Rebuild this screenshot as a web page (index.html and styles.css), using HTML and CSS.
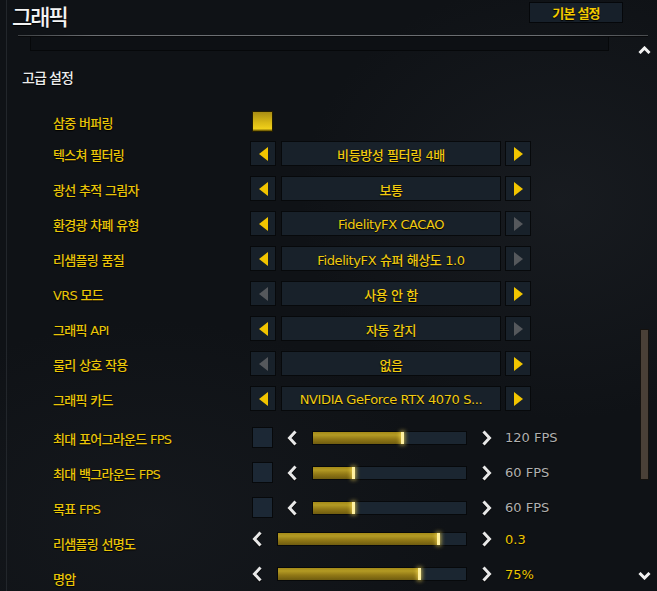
FILE: index.html
```html
<!DOCTYPE html>
<html lang="ko">
<head>
<meta charset="utf-8">
<title>그래픽</title>
<link rel="stylesheet" href="styles.css">
</head>
<body>
<div class="screen">
  <header class="header">
    <h1 class="title">그래픽</h1>
    <div class="reset">기본 설정</div>
  </header>
  <div class="divider"></div>
  <div class="main">
    <div class="content">
      <div class="clip-box"></div>
      <h2 class="section">고급 설정</h2>
      <div class="rows">
        <div class="row row-first">
          <span class="label">삼중 버퍼링</span>
          <span class="check on"></span>
        </div>

        <div class="row">
          <span class="label">텍스쳐 필터링</span>
          <div class="selector">
            <span class="sbtn on"><svg width="9" height="14" viewBox="0 0 9 14"><polygon points="9,0 0,7 9,14"/></svg></span>
            <span class="sval">비등방성 필터링 4배</span>
            <span class="sbtn on"><svg width="9" height="14" viewBox="0 0 9 14"><polygon points="0,0 9,7 0,14"/></svg></span>
          </div>
        </div>

        <div class="row">
          <span class="label">광선 추적 그림자</span>
          <div class="selector">
            <span class="sbtn on"><svg width="9" height="14" viewBox="0 0 9 14"><polygon points="9,0 0,7 9,14"/></svg></span>
            <span class="sval">보통</span>
            <span class="sbtn on"><svg width="9" height="14" viewBox="0 0 9 14"><polygon points="0,0 9,7 0,14"/></svg></span>
          </div>
        </div>

        <div class="row">
          <span class="label">환경광 차폐 유형</span>
          <div class="selector">
            <span class="sbtn on"><svg width="9" height="14" viewBox="0 0 9 14"><polygon points="9,0 0,7 9,14"/></svg></span>
            <span class="sval">FidelityFX CACAO</span>
            <span class="sbtn off"><svg width="9" height="14" viewBox="0 0 9 14"><polygon points="0,0 9,7 0,14"/></svg></span>
          </div>
        </div>

        <div class="row">
          <span class="label">리샘플링 품질</span>
          <div class="selector">
            <span class="sbtn on"><svg width="9" height="14" viewBox="0 0 9 14"><polygon points="9,0 0,7 9,14"/></svg></span>
            <span class="sval">FidelityFX 슈퍼 해상도 1.0</span>
            <span class="sbtn off"><svg width="9" height="14" viewBox="0 0 9 14"><polygon points="0,0 9,7 0,14"/></svg></span>
          </div>
        </div>

        <div class="row">
          <span class="label">VRS 모드</span>
          <div class="selector">
            <span class="sbtn off"><svg width="9" height="14" viewBox="0 0 9 14"><polygon points="9,0 0,7 9,14"/></svg></span>
            <span class="sval">사용 안 함</span>
            <span class="sbtn on"><svg width="9" height="14" viewBox="0 0 9 14"><polygon points="0,0 9,7 0,14"/></svg></span>
          </div>
        </div>

        <div class="row">
          <span class="label">그래픽 API</span>
          <div class="selector">
            <span class="sbtn on"><svg width="9" height="14" viewBox="0 0 9 14"><polygon points="9,0 0,7 9,14"/></svg></span>
            <span class="sval">자동 감지</span>
            <span class="sbtn off"><svg width="9" height="14" viewBox="0 0 9 14"><polygon points="0,0 9,7 0,14"/></svg></span>
          </div>
        </div>

        <div class="row">
          <span class="label">물리 상호 작용</span>
          <div class="selector">
            <span class="sbtn off"><svg width="9" height="14" viewBox="0 0 9 14"><polygon points="9,0 0,7 9,14"/></svg></span>
            <span class="sval">없음</span>
            <span class="sbtn on"><svg width="9" height="14" viewBox="0 0 9 14"><polygon points="0,0 9,7 0,14"/></svg></span>
          </div>
        </div>

        <div class="row">
          <span class="label">그래픽 카드</span>
          <div class="selector">
            <span class="sbtn on"><svg width="9" height="14" viewBox="0 0 9 14"><polygon points="9,0 0,7 9,14"/></svg></span>
            <span class="sval">NVIDIA GeForce RTX 4070 S...</span>
            <span class="sbtn on"><svg width="9" height="14" viewBox="0 0 9 14"><polygon points="0,0 9,7 0,14"/></svg></span>
          </div>
        </div>

        <div class="row row-gap">
          <span class="label">최대 포어그라운드 FPS</span>
          <div class="slider">
            <span class="check off"></span>
            <svg class="chev" width="10" height="16" viewBox="0 0 10 16"><polyline points="8.5,1.5 2.5,8 8.5,14.5"/></svg>
            <span class="track short"><span class="fill" style="width:58.7%"></span></span>
            <svg class="chev" width="10" height="16" viewBox="0 0 10 16"><polyline points="1.5,1.5 7.5,8 1.5,14.5"/></svg>
            <span class="val">120 FPS</span>
          </div>
        </div>

        <div class="row">
          <span class="label">최대 백그라운드 FPS</span>
          <div class="slider">
            <span class="check off"></span>
            <svg class="chev" width="10" height="16" viewBox="0 0 10 16"><polyline points="8.5,1.5 2.5,8 8.5,14.5"/></svg>
            <span class="track short"><span class="fill" style="width:27.1%"></span></span>
            <svg class="chev" width="10" height="16" viewBox="0 0 10 16"><polyline points="1.5,1.5 7.5,8 1.5,14.5"/></svg>
            <span class="val">60 FPS</span>
          </div>
        </div>

        <div class="row">
          <span class="label">목표 FPS</span>
          <div class="slider">
            <span class="check off"></span>
            <svg class="chev" width="10" height="16" viewBox="0 0 10 16"><polyline points="8.5,1.5 2.5,8 8.5,14.5"/></svg>
            <span class="track short"><span class="fill" style="width:27.1%"></span></span>
            <svg class="chev" width="10" height="16" viewBox="0 0 10 16"><polyline points="1.5,1.5 7.5,8 1.5,14.5"/></svg>
            <span class="val">60 FPS</span>
          </div>
        </div>

        <div class="row">
          <span class="label">리샘플링 선명도</span>
          <div class="slider slider-plain">
            <svg class="chev" width="10" height="16" viewBox="0 0 10 16"><polyline points="8.5,1.5 2.5,8 8.5,14.5"/></svg>
            <span class="track long"><span class="fill" style="width:85.8%"></span></span>
            <svg class="chev" width="10" height="16" viewBox="0 0 10 16"><polyline points="1.5,1.5 7.5,8 1.5,14.5"/></svg>
            <span class="val hl">0.3</span>
          </div>
        </div>

        <div class="row">
          <span class="label">명암</span>
          <div class="slider slider-plain">
            <svg class="chev" width="10" height="16" viewBox="0 0 10 16"><polyline points="8.5,1.5 2.5,8 8.5,14.5"/></svg>
            <span class="track long"><span class="fill" style="width:75.3%"></span></span>
            <svg class="chev" width="10" height="16" viewBox="0 0 10 16"><polyline points="1.5,1.5 7.5,8 1.5,14.5"/></svg>
            <span class="val hl">75%</span>
          </div>
        </div>
      </div>
    </div>
    <div class="scrollbar">
      <svg class="sc-up" width="13" height="8" viewBox="0 0 13 8"><polyline points="1.5,7 6.5,2 11.5,7"/></svg>
      <span class="thumb"></span>
      <svg class="sc-down" width="13" height="8" viewBox="0 0 13 8"><polyline points="1.5,1 6.5,6 11.5,1"/></svg>
    </div>
  </div>
</div>
</body>
</html>
```

FILE: styles.css
```css
* { box-sizing: border-box; }

body {
  margin: 0;
  background: #0f1216;
}

.screen {
  width: 657px;
  height: 591px;
  overflow: hidden;
  display: flex;
  flex-direction: column;
  font-family: "DejaVu Sans", "Noto Sans CJK KR", sans-serif;
  background:
    linear-gradient(to right, transparent 6px, #22262b 6px, #22262b 7px, transparent 7px),
    radial-gradient(ellipse 260px 220px at 560px 200px, rgba(40, 44, 50, 0.35), transparent),
    radial-gradient(ellipse 300px 200px at 150px 520px, rgba(34, 38, 44, 0.3), transparent),
    #0f1216;
}

/* Header */
.header {
  height: 35px;
  flex: 0 0 auto;
  display: flex;
  justify-content: space-between;
  align-items: flex-start;
}

.title {
  margin: 2px 0 0 12px;
  font-family: "Noto Sans CJK KR", sans-serif;
  font-weight: 500;
  font-size: 22px;
  line-height: 26px;
  letter-spacing: -2px;
  color: #f4f4f4;
  text-shadow: 0 1px 1px #000;
}

.reset {
  margin: 2px 34px 0 0;
  width: 94px;
  height: 21px;
  background: #17202a;
  border: 1px solid #05070a;
  display: flex;
  align-items: center;
  justify-content: center;
  color: #f5cb00;
  font-family: "Noto Sans CJK KR", sans-serif;
  font-weight: 700;
  font-size: 13px;
  letter-spacing: -0.8px;
  text-shadow: 0 1px 1px #000;
}

.divider {
  flex: 0 0 auto;
  height: 2px;
  margin: 0 9px 0 18px;
  background: linear-gradient(to right, #3d4043, #6c6f73 12%, #6a6d71 85%, #4a4d50);
  border-bottom: 1px solid #08090b;
}

/* Main area */
.main {
  flex: 1;
  display: flex;
  min-height: 0;
}

.content {
  width: 637px;
  flex: 0 0 auto;
}

.clip-box {
  margin-left: 30px;
  width: 579px;
  height: 14px;
  background: #0d1014;
  border: 1px solid #06080a;
  border-top: none;
}

.section {
  margin: 16px 0 0 22px;
  font-family: "Noto Sans CJK KR", sans-serif;
  font-weight: 500;
  font-size: 14px;
  line-height: 20px;
  letter-spacing: -0.9px;
  color: #ececec;
  text-shadow: 0 1px 1px #000;
}

.rows {
  margin-top: 19px;
}

.row {
  height: 35px;
  display: flex;
  align-items: center;
}

.row-first { height: 30px; }
.row-gap { margin-top: 4px; }

.label {
  flex: 0 0 250px;
  padding-left: 53px;
  padding-top: 2px;
  font-size: 13px;
  font-weight: 500;
  letter-spacing: -0.7px;
  color: #eac508;
  text-shadow: 0 1px 1px #000;
  white-space: nowrap;
}

/* Checkbox */
.check {
  width: 21px;
  height: 21px;
  margin-left: 2px;
  border: 1px solid #07090b;
  flex: 0 0 auto;
}

.check.on {
  background: linear-gradient(#a98d14, #d9b915 55%, #f0d01a 88%, #5c4a00);
  border-color: #231d02;
}

.check.off {
  background: #1c2835;
}

/* Selector */
.selector {
  display: flex;
  height: 25px;
}

.sbtn {
  width: 26px;
  height: 25px;
  background: #18212a;
  border: 1px solid #07090b;
  display: flex;
  align-items: center;
  justify-content: center;
}

.sbtn.on svg { fill: #f2c500; }
.sbtn.off svg { fill: #55585c; }

.sval {
  width: 220px;
  height: 25px;
  margin: 0 4px 0 5px;
  background: #18212a;
  border: 1px solid #07090b;
  display: flex;
  align-items: center;
  justify-content: center;
  padding-top: 1px;
  font-size: 13px;
  font-weight: 500;
  letter-spacing: -0.4px;
  color: #f0ca10;
  text-shadow: 0 1px 1px #000;
  white-space: nowrap;
}

/* Slider */
.slider {
  display: flex;
  align-items: center;
}

.slider .check {
  margin-right: 14px;
}

.slider-plain {
  margin-left: 2px;
  margin-top: -7px;
}

.chev {
  flex: 0 0 auto;
  fill: none;
  stroke: #e8e8e8;
  stroke-width: 3;
  filter: drop-shadow(0 1px 0 #000);
}

.track {
  margin: 0 15px;
  height: 14px;
  border: 1px solid #07090b;
  background: #1b2631;
  display: block;
}

.track.short { width: 155px; }
.track.long { width: 190px; }

.fill {
  display: block;
  height: 100%;
  position: relative;
  background: linear-gradient(#a48a18, #b39a24 25%, #917816 60%, #6f5c10);
}

.fill::after {
  content: "";
  position: absolute;
  right: -1px;
  top: 0;
  bottom: 0;
  width: 3px;
  background: #fff1a0;
  box-shadow: 0 0 4px 1px rgba(255, 226, 90, 0.7);
}

.val {
  margin-left: 13px;
  font-size: 13px;
  color: #b0b0b0;
  text-shadow: 0 1px 1px #000;
  white-space: nowrap;
}

.val.hl {
  color: #ecc500;
}

/* Scrollbar */
.scrollbar {
  width: 14px;
  flex: 0 0 auto;
  display: flex;
  flex-direction: column;
  align-items: center;
}

.scrollbar svg {
  fill: none;
  stroke: #f2f2f2;
  stroke-width: 3;
  flex: 0 0 auto;
}

.sc-up { margin-top: 9px; }

.thumb {
  margin-top: 275px;
  width: 9px;
  height: 151px;
  background: #4a4037;
  border: 1px solid #15120f;
  flex: 0 0 auto;
}

.sc-down { margin-top: 92px; }
```
